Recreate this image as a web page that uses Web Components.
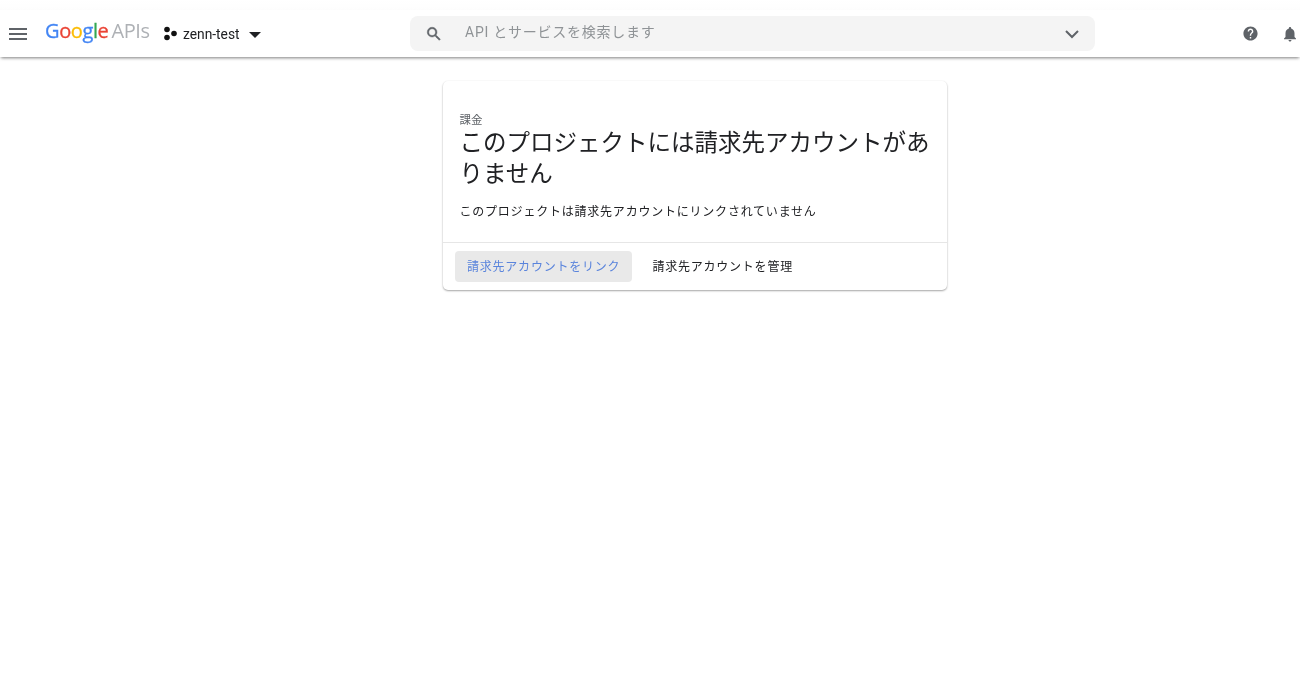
<!DOCTYPE html>
<html lang="ja">
<head>
<meta charset="utf-8">
<title>Billing</title>
<style>
  html, body { margin: 0; height: 100%; overflow: hidden; background: #fff; }
  body { font-family: Roboto, "Noto Sans CJK JP", sans-serif; color: #202124; filter: blur(0.4px); }
</style>
</head>
<body>
<app-header project="zenn-test" placeholder="API とサービスを検索します"></app-header>
<main-area>
  <billing-card label="課金" title="このプロジェクトには請求先アカウントがありません" message="このプロジェクトは請求先アカウントにリンクされていません">
    <action-button primary>請求先アカウントをリンク</action-button>
    <action-button>請求先アカウントを管理</action-button>
  </billing-card>
</main-area>

<script>
class AppHeader extends HTMLElement {
    constructor() {
        super();
        this.attachShadow({ mode: 'open' });
    }

    connectedCallback() {
        this.shadowRoot.innerHTML = `
            <style>
                :host {
                    display: block;
                    background: linear-gradient(#fff, #f4f4f4);
                    padding-top: 10px;
                    font-family: Roboto, "Noto Sans CJK JP", sans-serif;
                }
                .bar {
                    height: 47px;
                    background: #fff;
                    box-shadow: 0 2px 3px -1px rgba(0, 0, 0, 0.5);
                    display: flex;
                    align-items: center;
                }
                .menu { margin-left: 9px; width: 18px; height: 12px; display: block; }
                .logo {
                    margin-left: 18px;
                    width: 105px;
                    font-family: "Open Sans", sans-serif;
                    font-size: 20px;
                    letter-spacing: -0.4px;
                    white-space: nowrap;
                    margin-top: -6px;
                }
                .logo .g { -webkit-text-stroke: 0.3px currentColor; }
                .logo .apis { color: #aeb1b5; margin-left: 3px; }
                .project {
                    margin-left: 13px;
                    display: flex;
                    align-items: center;
                    width: 247px;
                    font-size: 13.8px;
                    color: #202124;
                }
                .dots { width: 15px; height: 15px; margin-right: 5px; }
                .caret { width: 0; height: 0; margin-left: 9px; margin-top: 2px;
                    border-left: 6px solid transparent; border-right: 6px solid transparent; border-top: 6px solid #202124; }
                .search {
                    width: 685px;
                    height: 35px;
                    box-sizing: border-box;
                    background: #f4f4f4;
                    border-radius: 8px;
                    display: flex;
                    align-items: center;
                    padding: 0 11px 0 15px;
                    font-size: 14px;
                }
                .search .text { margin-left: 22px; flex: 1; margin-top: -5px; color: #8f9396; letter-spacing: 0.75px; }
                .right { margin-left: auto; display: flex; align-items: center; gap: 22px; margin-right: 1px; }
                svg { display: block; }
            </style>
            <div class="bar">
                <svg class="menu" viewBox="0 0 18 12"><path fill="#5f6368" d="M0 0h18v2H0zM0 5h18v2H0zM0 10h18v2H0z"/></svg>
                <div class="logo"><span class="g" style="color:#4285f4">G</span><span class="g" style="color:#ea4335">o</span><span class="g" style="color:#fbbc05">o</span><span class="g" style="color:#4285f4">g</span><span class="g" style="color:#34a853">l</span><span class="g" style="color:#ea4335">e</span><span class="apis">APIs</span></div>
                <div class="project">
                    <svg class="dots" viewBox="0 0 15 15"><circle cx="4" cy="3.5" r="2.8" fill="#111"/><circle cx="11" cy="7.5" r="2.8" fill="#111"/><circle cx="4" cy="11.5" r="2.8" fill="#111"/></svg>
                    <span>${this.getAttribute('project')}</span>
                    <span class="caret"></span>
                </div>
                <div class="search">
                    <svg width="18" height="18" viewBox="0 0 24 24"><path fill="#5f6368" stroke="#5f6368" stroke-width="0.6" d="M15.5 14h-.79l-.28-.27A6.47 6.47 0 0 0 16 9.5 6.5 6.5 0 1 0 9.5 16c1.61 0 3.09-.59 4.23-1.57l.27.28v.79l5 4.99L20.49 19l-4.99-5zm-6 0C7.01 14 5 11.99 5 9.5S7.01 5 9.5 5 14 7.01 14 9.5 11.99 14 9.5 14z"/></svg>
                    <span class="text">${this.getAttribute('placeholder')}</span>
                    <svg width="24" height="24" viewBox="0 0 24 24"><path fill="none" stroke="#5f6368" stroke-width="2" d="M6 9l6 6 6-6"/></svg>
                </div>
                <div class="right">
                    <svg width="17" height="17" viewBox="0 0 24 24"><path fill="#5f6368" d="M12 2C6.48 2 2 6.48 2 12s4.48 10 10 10 10-4.48 10-10S17.52 2 12 2zm1 17h-2v-2h2v2zm2.07-7.75l-.9.92C13.45 12.9 13 13.5 13 15h-2v-.5c0-1.1.45-2.1 1.17-2.83l1.24-1.26c.37-.36.59-.86.59-1.41 0-1.1-.9-2-2-2s-2 .9-2 2H8c0-2.21 1.79-4 4-4s4 1.79 4 4c0 .88-.36 1.68-.93 2.25z"/></svg>
                    <svg width="18" height="18" viewBox="0 0 24 24"><path fill="#5f6368" d="M12 22c1.1 0 2-.9 2-2h-4c0 1.1.9 2 2 2zm6-6v-5c0-3.07-1.63-5.64-4.5-6.32V4c0-.83-.67-1.5-1.5-1.5s-1.5.67-1.5 1.5v.68C7.64 5.36 6 7.92 6 11v5l-2 2v1h16v-1l-2-2z"/></svg>
                </div>
            </div>
        `;
    }
}

class MainArea extends HTMLElement {
    constructor() {
        super();
        this.attachShadow({ mode: 'open' });
        this.shadowRoot.innerHTML = `
            <style>
                :host { display: block; padding: 24px 0 0 443px; }
            </style>
            <slot></slot>
        `;
    }
}

class BillingCard extends HTMLElement {
    constructor() {
        super();
        this.attachShadow({ mode: 'open' });
    }

    connectedCallback() {
        this.shadowRoot.innerHTML = `
            <style>
                :host {
                    display: block;
                    width: 504px;
                    height: 209px;
                    background: #fff;
                    border-radius: 5px;
                    box-shadow: 0 1px 2px rgba(0, 0, 0, 0.35), 0 0 2px rgba(0, 0, 0, 0.03);
                    font-family: Roboto, "Noto Sans CJK JP", sans-serif;
                }
                .body { height: 162px; box-sizing: border-box; padding: 31px 16px 0 16.5px; border-bottom: 1px solid #e6e6e6; }
                .label { font-size: 11.5px; line-height: 16px; color: #5f6368; }
                h1 { margin: 0; font-size: 23.5px; font-weight: 400; line-height: 31px; color: #202124; }
                p { margin: 14px 0 0; font-size: 12px; letter-spacing: 0.78px; line-height: 16px; color: #202124; }
                .actions { display: flex; align-items: center; gap: 8px; padding: 8px 12px; }
            </style>
            <div class="body">
                <div class="label">${this.getAttribute('label')}</div>
                <h1>${this.getAttribute('title')}</h1>
                <p>${this.getAttribute('message')}</p>
            </div>
            <div class="actions"><slot></slot></div>
        `;
    }
}

class ActionButton extends HTMLElement {
    constructor() {
        super();
        this.attachShadow({ mode: 'open' });
        this.shadowRoot.innerHTML = `
            <style>
                :host {
                    display: block;
                    height: 31px;
                    line-height: 32px;
                    padding: 0 12px;
                    border-radius: 4px;
                    font-size: 12px;
                    letter-spacing: 0.78px;
                    color: #202124;
                    cursor: pointer;
                }
                :host([primary]) { background: #e9e9e9; color: #5a84dc; }
            </style>
            <slot></slot>
        `;
    }
}

customElements.define('app-header', AppHeader);
customElements.define('main-area', MainArea);
customElements.define('billing-card', BillingCard);
customElements.define('action-button', ActionButton);
</script>
</body>
</html>
